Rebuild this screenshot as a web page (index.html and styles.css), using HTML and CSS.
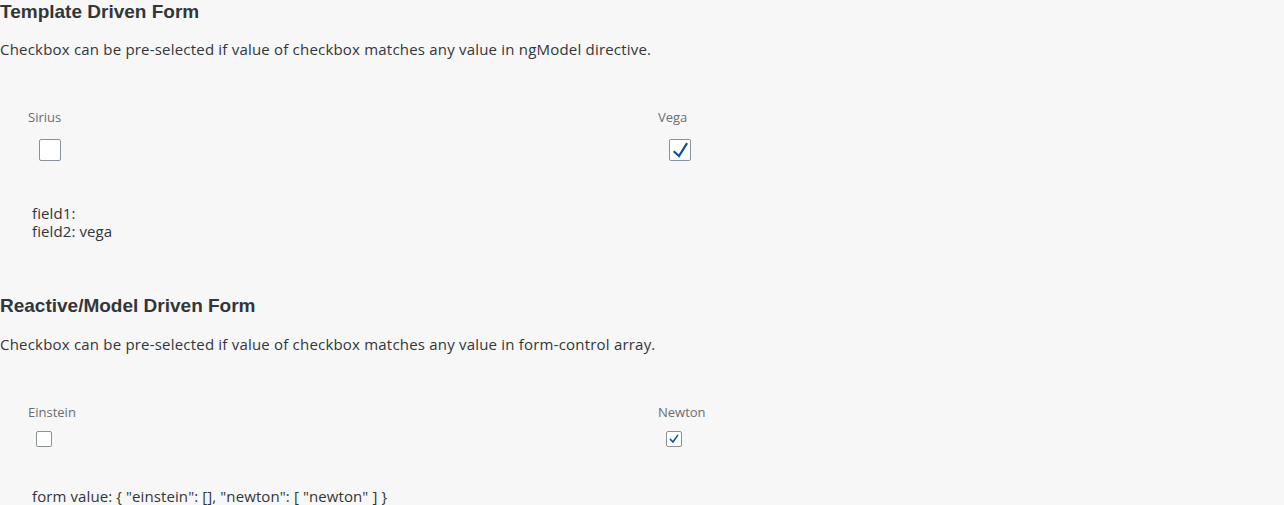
FILE: index.html
```html
<!DOCTYPE html>
<html>
<head>
<meta charset="utf-8">
<link rel="stylesheet" href="styles.css">
</head>
<body>
<section class="sec">
  <h3 class="title">Template Driven Form</h3>
  <p class="desc">Checkbox can be pre-selected if value of checkbox matches any value in ngModel directive.</p>
  <div class="row">
    <div class="col">
      <div class="label">Sirius</div>
      <div class="box-wrap big"><span class="box big"></span></div>
    </div>
    <div class="col">
      <div class="label">Vega</div>
      <div class="box-wrap big"><span class="box big checked">
        <svg viewBox="0 0 22 22" width="22" height="22"><path d="M5.5 13 L10 17 L17.5 5" fill="none" stroke="#0854a0" stroke-width="2.2" stroke-linecap="square"/></svg>
      </span></div>
    </div>
  </div>
  <div class="out out1">field1: <br>field2: vega</div>
</section>
<section class="sec sec2">
  <h3 class="title">Reactive/Model Driven Form</h3>
  <p class="desc">Checkbox can be pre-selected if value of checkbox matches any value in form-control array.</p>
  <div class="row">
    <div class="col">
      <div class="label">Einstein</div>
      <div class="box-wrap small"><span class="box small"></span></div>
    </div>
    <div class="col">
      <div class="label">Newton</div>
      <div class="box-wrap small"><span class="box small checked">
        <svg viewBox="0 0 16 16" width="16" height="16"><path d="M4.5 8.5 L7 11 L11.5 4.5" fill="none" stroke="#0854a0" stroke-width="1.6" stroke-linecap="square"/></svg>
      </span></div>
    </div>
  </div>
  <div class="out out2">form value: { "einstein": [], "newton": [ "newton" ] }</div>
</section>
</body>
</html>
```
FILE: styles.css
```css
html, body {
  margin: 0;
  padding: 0;
  background: #f7f7f7;
  color: #32363a;
  font-family: "Open Sans", "Liberation Sans", Arial, sans-serif;
}
.sec {
  display: flex;
  flex-direction: column;
}
.title {
  margin: 0;
  font-family: "Liberation Sans", Arial, sans-serif;
  font-size: 19px;
  line-height: 24px;
  font-weight: bold;
  color: #32363a;
}
.desc {
  margin: 16px 0 0 0;
  font-size: 15px;
  line-height: 18px;
  letter-spacing: 0.2px;
}
.row {
  display: flex;
  padding-left: 28px;
  margin-top: 51px;
}
.col {
  width: 630px;
  flex-shrink: 0;
  display: flex;
  flex-direction: column;
}
.label {
  font-size: 13px;
  line-height: 16px;
  color: #6a6d70;
}
.box-wrap {
  display: flex;
}
.box-wrap.big {
  margin-top: 14px;
  padding-left: 11px;
}
.box-wrap.small {
  margin-top: 11px;
  padding-left: 8px;
}
.box {
  display: block;
  box-sizing: border-box;
  background: #fff;
  border: 1px solid #89919a;
  border-radius: 2px;
  position: relative;
}
.box svg {
  position: absolute;
  left: -1px;
  top: -1px;
}
.box.big { width: 22px; height: 22px; }
.box.small { width: 16px; height: 16px; }
.out {
  padding-left: 32px;
  font-size: 15px;
  line-height: 18px;
  letter-spacing: 0.1px;
}
.out1 { margin-top: 43px; }
.sec2 { margin-top: 54px; }
.sec2 .desc { margin-top: 17px; }
.sec2 .row { margin-top: 51px; }
.out2 { margin-top: 40px; }
```
